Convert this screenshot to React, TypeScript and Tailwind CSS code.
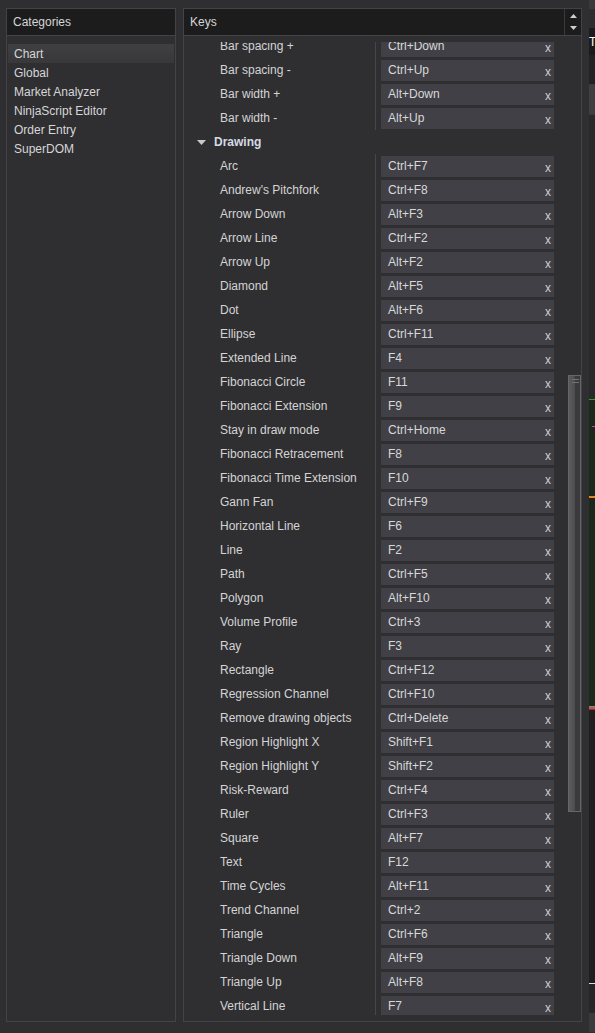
import React from "react";

type Row = { label: string; keys?: string; group?: boolean };

const rows: Row[] = [
  { label: "Bar spacing +", keys: "Ctrl+Down" },
  { label: "Bar spacing -", keys: "Ctrl+Up" },
  { label: "Bar width +", keys: "Alt+Down" },
  { label: "Bar width -", keys: "Alt+Up" },
  { label: "Drawing", group: true },
  { label: "Arc", keys: "Ctrl+F7" },
  { label: "Andrew's Pitchfork", keys: "Ctrl+F8" },
  { label: "Arrow Down", keys: "Alt+F3" },
  { label: "Arrow Line", keys: "Ctrl+F2" },
  { label: "Arrow Up", keys: "Alt+F2" },
  { label: "Diamond", keys: "Alt+F5" },
  { label: "Dot", keys: "Alt+F6" },
  { label: "Ellipse", keys: "Ctrl+F11" },
  { label: "Extended Line", keys: "F4" },
  { label: "Fibonacci Circle", keys: "F11" },
  { label: "Fibonacci Extension", keys: "F9" },
  { label: "Stay in draw mode", keys: "Ctrl+Home" },
  { label: "Fibonacci Retracement", keys: "F8" },
  { label: "Fibonacci Time Extension", keys: "F10" },
  { label: "Gann Fan", keys: "Ctrl+F9" },
  { label: "Horizontal Line", keys: "F6" },
  { label: "Line", keys: "F2" },
  { label: "Path", keys: "Ctrl+F5" },
  { label: "Polygon", keys: "Alt+F10" },
  { label: "Volume Profile", keys: "Ctrl+3" },
  { label: "Ray", keys: "F3" },
  { label: "Rectangle", keys: "Ctrl+F12" },
  { label: "Regression Channel", keys: "Ctrl+F10" },
  { label: "Remove drawing objects", keys: "Ctrl+Delete" },
  { label: "Region Highlight X", keys: "Shift+F1" },
  { label: "Region Highlight Y", keys: "Shift+F2" },
  { label: "Risk-Reward", keys: "Ctrl+F4" },
  { label: "Ruler", keys: "Ctrl+F3" },
  { label: "Square", keys: "Alt+F7" },
  { label: "Text", keys: "F12" },
  { label: "Time Cycles", keys: "Alt+F11" },
  { label: "Trend Channel", keys: "Ctrl+2" },
  { label: "Triangle", keys: "Ctrl+F6" },
  { label: "Triangle Down", keys: "Alt+F9" },
  { label: "Triangle Up", keys: "Alt+F8" },
  { label: "Vertical Line", keys: "F7" },
];

const categories = ["Chart", "Global", "Market Analyzer", "NinjaScript Editor", "Order Entry", "SuperDOM"];

const KeyRow = ({ row }: { row: Row }) => {
  if (row.group) {
    return (
      <div className="flex h-[24px] items-center pl-[13px]">
        <svg width="9" height="5" viewBox="0 0 9 5" className="mr-[8px]">
          <polygon points="0,0 9,0 4.5,5" fill="#c9c9cc" />
        </svg>
        <span className="font-bold text-[#d6dbe4]">{row.label}</span>
      </div>
    );
  }
  return (
    <div className="flex h-[24px] items-center">
      <div className="w-[191px] shrink-0 pl-[36px] text-[#d4d4d4]">{row.label}</div>
      <div className="flex h-full items-center border-l border-[#46464b] pl-[5px]">
        <div className="flex h-[21px] w-[173px] items-center justify-between bg-[#404046] pl-[7px] pr-[3px] text-[#d8d8d8]">
          <span>{row.keys}</span>
          <span className="pt-[3px] text-[#cfcfcf]">x</span>
        </div>
      </div>
    </div>
  );
};

export default function App() {
  return (
    <div
      className="flex h-[1033px] w-[595px] overflow-hidden bg-[#2f2f32] pt-[8px] pl-[6px] text-[12px]"
      style={{ fontFamily: '"Liberation Sans", Arial, sans-serif' }}
    >
      {/* Categories */}
      <div className="flex h-[1014px] w-[170px] shrink-0 flex-col border border-[#434347]">
        <div className="flex h-[27px] items-center border-b border-[#434347] bg-[#1c1c1d] pl-[6px] text-[#d6d6d6]">
          Categories
        </div>
        <div className="flex flex-col pt-[8px]">
          {categories.map((c, i) => (
            <div
              key={c}
              className={`mx-[1px] flex h-[19px] items-center pl-[6px] text-[#d6d6d8] ${
                i === 0 ? "bg-gradient-to-b from-[#404043] to-[#38383b]" : ""
              }`}
            >
              {c}
            </div>
          ))}
        </div>
      </div>

      {/* Keys */}
      <div className="ml-[7px] flex h-[1014px] w-[399px] shrink-0 flex-col border border-[#434347]">
        <div className="flex h-[27px] border-b border-[#434347] bg-[#1c1c1d]">
          <div className="flex flex-1 items-center pl-[6px] text-[#d6d6d6]">Keys</div>
          <div className="flex w-[17px] flex-col items-center justify-between border-l border-[#3a3a3e] py-[5px]">
            <svg width="7" height="4" viewBox="0 0 7 4">
              <polygon points="3.5,0 7,4 0,4" fill="#cfcfd2" />
            </svg>
            <svg width="7" height="4" viewBox="0 0 7 4">
              <polygon points="0,0 7,0 3.5,4" fill="#cfcfd2" />
            </svg>
          </div>
        </div>
        <div className="flex min-h-0 flex-1">
          <div className="flex min-h-0 flex-1 flex-col pt-[6px] pb-[6px]">
            <div className="min-h-0 flex-1 overflow-hidden">
              <div className="mt-[-8px]">
                {rows.map((r) => (
                  <KeyRow key={r.label} row={r} />
                ))}
              </div>
            </div>
          </div>
          <div className="w-[18px] shrink-0 pl-[5px] pt-[339px]">
            <div className="flex h-[437px] w-[13px] border border-[#66666a]">
              <div className="flex w-[6px] flex-col items-end bg-gradient-to-r from-[#5c5c5f] to-[#4c4c4f] pt-[2px]">
                <div className="mt-[1px] h-[1px] w-[3px] bg-[#727276]" />
                <div className="mt-[2px] h-[1px] w-[3px] bg-[#727276]" />
              </div>
              <div className="flex flex-1 flex-col bg-[#3a3a3d] pt-[2px]">
                <div className="mt-[1px] h-[1px] w-[4px] bg-[#727276]" />
                <div className="mt-[2px] h-[1px] w-[4px] bg-[#727276]" />
              </div>
            </div>
          </div>
        </div>
      </div>

      {/* Window behind, partly visible */}
      <div className="mt-[-8px] ml-[7px] flex w-[6px] shrink-0 flex-col">
        <div className="h-[9px] bg-[#3a3a3d]" />
        <div className="h-[19px] bg-[#2d2d30]" />
        <div className="flex h-[27px] items-center overflow-hidden bg-[#1b1b1b] text-[12px] leading-none text-white">T</div>
        <div className="h-[30px] border-b border-[#3a3a3e] bg-[#222224]" />
        <div className="h-[30px] border-b border-[#3a3a3e] bg-[#3e3e43]" />
        <div className="h-[284px] bg-[#29292b]" />
        <div className="h-[1px] bg-[#2aa52a]" />
        <div className="flex h-[306px] flex-col bg-[#1c281c]">
          <div className="h-[26px]" />
          <div className="ml-[3px] h-[1px] bg-[#c040c0]" />
          <div className="h-[69px]" />
          <div className="h-[2px] bg-[#e8841c]" />
        </div>
        <div className="h-[1px] bg-[#6aa04a]" />
        <div className="h-[2px] bg-[#c05070]" />
        <div className="h-[1px] bg-[#a03030]" />
        <div className="h-[273px] bg-[#1f1f21]" />
        <div className="h-[1px] bg-[#dcdcdc]" />
        <div className="h-[29px] bg-[#262628]" />
        <div className="h-[19px] bg-[#3a3a3d]" />
        <div className="flex-1 bg-[#2e2e30]" />
      </div>
    </div>
  );
}
